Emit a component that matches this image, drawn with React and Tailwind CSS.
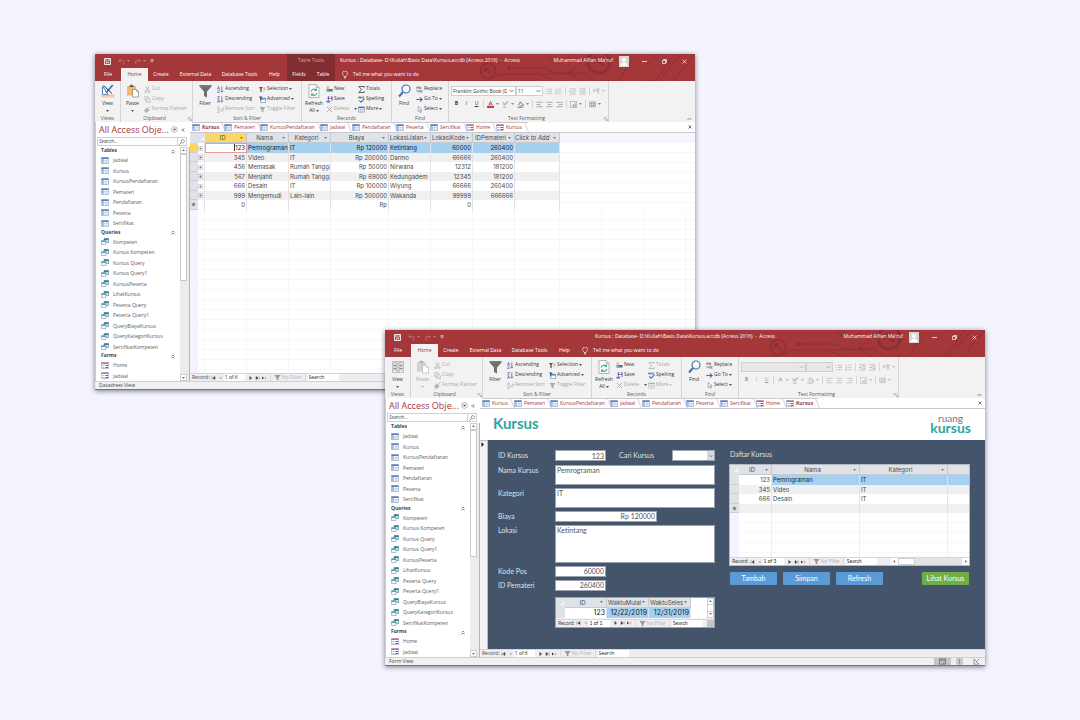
import { useId } from "react";

/* ---------- icons ---------- */

function Svg({ className = "w-[7px] h-[7px]", children, box = "0 0 16 16" }) {
  return (
    <svg viewBox={box} className={`shrink-0 ${className}`} fill="none" aria-hidden="true">
      {children}
    </svg>
  );
}

const tone = (off, color) => (off ? "#b4b4b4" : color);

const DownArrow = ({ className = "w-[3px] h-[2px]", color = "#777" }) => (
  <Svg className={className} box="0 0 6 4">
    <path d="M0 0h6L3 4z" fill={color} />
  </Svg>
);

const ViewDesignIcon = () => (
  <Svg className="w-[14px] h-[14px]" box="0 0 28 28">
    <path d="M3 4v17h11z" fill="#fff" stroke="#4f81bd" strokeWidth="2" />
    <path d="M2 22h24v4H2z" fill="#fbe3d0" stroke="#e8a87c" strokeWidth="1.2" />
    <path d="M25 3 12 18l-3 1 1-4L22 1z" fill="#3a7abf" />
    <path d="M5 3l17 16" stroke="#333" strokeWidth="2" />
    <path d="M6 22v2M10 22v2M14 22v2M18 22v2M22 22v2" stroke="#d28a5a" />
  </Svg>
);
const ViewFormIcon = () => (
  <Svg className="w-[14px] h-[14px]" box="0 0 28 28">
    <path d="M3 3h22v22H3zM3 8h22M3 14h22M3 20h22M12 3v22M16 3v22" stroke="#aaa" strokeWidth="1.4" />
    <path d="M5 10h6v2H5zM17 10h6v2h-6zM5 16h6v2H5zM17 16h6v2h-6zM5 5h6v1H5zM17 5h6v1h-6z" fill="#888" />
  </Svg>
);
const PasteIcon = ({ off }) => (
  <Svg className="w-[14px] h-[14px]" box="0 0 28 28">
    <rect x="2" y="4" width="18" height="19" fill={off ? "#d2d2d2" : "#edbd6b"} />
    <path d="M7 6V3h2a2 2 0 0 1 4 0h2v3z" fill={off ? "#aaa" : "#555"} />
    <path d="M13 11h8l4 4v11H13z" fill="#fff" stroke={off ? "#b0b0b0" : "#777"} strokeWidth="1.3" />
    <path d="M21 11v4h4" stroke={off ? "#b0b0b0" : "#777"} />
  </Svg>
);
const CutIcon = () => (
  <Svg>
    <path d="M4 1l7 10M12 1L5 11" stroke="#aaa" strokeWidth="1.8" />
    <circle cx="4" cy="13" r="2" stroke="#aaa" strokeWidth="1.6" />
    <circle cx="12" cy="13" r="2" stroke="#aaa" strokeWidth="1.6" />
  </Svg>
);
const CopyIcon = () => (
  <Svg>
    <path d="M2 1h6l2 2v8H2z" fill="#eee" stroke="#aaa" strokeWidth="1.3" />
    <path d="M6 5h6l3 3v7H6z" fill="#f5f5f5" stroke="#aaa" strokeWidth="1.3" />
    <path d="M8 9h5M8 12h5" stroke="#aaa" />
  </Svg>
);
const BrushIcon = () => (
  <Svg>
    <path d="M15 1l-5 4M1 9c3 0 4-2 5-5l6 5c-2 3-5 5-8 6z" stroke="#a5a5a5" fill="#bbb" strokeWidth="1.6" />
  </Svg>
);
const FunnelBig = () => (
  <Svg className="w-[13px] h-[14px]" box="0 0 26 28">
    <path d="M1 2h24v3l-9 10v12l-6-3v-9L1 5z" fill="#6f6f6f" />
    <path d="M1 4h24" stroke="#9a9a9a" />
  </Svg>
);
const FunnelIcon = ({ color = "#aaa" }) => (
  <Svg>
    <path d="M1 2h14L10 9v6l-4-2V9z" fill={color} />
  </Svg>
);
const SortIcon = ({ top, bottom }) => (
  <Svg>
    {top === "A" ? (
      <path d="M1 7l2.5-6L6 7M2 5h3M1 9h5l-5 6h5" stroke="#3f6fb5" strokeWidth="1.5" />
    ) : (
      <path d="M1 1h5L1 7h5M1 15l2.5-6L6 15M2 13h3" stroke={bottom ? "#6a55b5" : "#3f6fb5"} strokeWidth="1.5" />
    )}
    <path d="M11 1v13M8 11l3 3 3-3" stroke="#555" strokeWidth="1.6" />
  </Svg>
);
const RemoveSortIcon = () => (
  <Svg>
    <path d="M1 7l2.5-6L6 7M1 9h5l-5 6h5M9 10l5-6 2 3-5 6z" stroke="#aaa" strokeWidth="1.5" />
  </Svg>
);
const SelectionIcon = () => (
  <Svg>
    <path d="M0 2h9L6 7v7l-3-1V7z" fill="#555" />
    <path d="M13 2l-4 6h3l-3 6 6-8h-3l3-4z" fill="#ea9a3e" />
  </Svg>
);
const AdvancedIcon = () => (
  <Svg>
    <path d="M4 5h11v10H4z" fill="#fff" stroke="#4a7fb8" strokeWidth="1.4" />
    <path d="M4 5h11v3H4z" fill="#4a7fb8" />
    <path d="M0 1h8L5 5v5L3 9V5z" fill="#444" />
  </Svg>
);
const RefreshIcon = () => (
  <Svg className="w-[12px] h-[14px]" box="0 0 24 28">
    <path d="M2 1h14l6 6v20H2z" fill="#fff" stroke="#999" strokeWidth="1.4" />
    <path d="M16 1v6h6" stroke="#999" strokeWidth="1.4" />
    <path d="M6.500 15a5.500 5.500 0 0 1 9.500-3M17.500 18a5.500 5.500 0 0 1-9.500 3" stroke="#4aa985" strokeWidth="2.4" />
    <path d="M18 8v6h-6zM6 25v-6h6z" fill="#4aa985" />
  </Svg>
);
const NewIcon = () => (
  <Svg>
    <path d="M1 7h14v6H1z" fill="#5a9bd5" />
    <path d="M7 8h8v2H7z" fill="#444" />
    <path d="M4 0v7M1 2l6 4M7 2L1 6" stroke="#eda24a" strokeWidth="1.6" />
  </Svg>
);
const SaveRecIcon = () => (
  <Svg>
    <path d="M4 1h11v10H4z" fill="#6f4fa5" />
    <path d="M7 1h5v4H7zM6 7h7v4H6z" fill="#fff" />
    <path d="M1 11h8v4H1z" fill="#4a7fc0" />
  </Svg>
);
const DeleteIcon = () => (
  <Svg>
    <path d="M2 2l12 12M14 2L2 14" stroke="#a5a5a5" strokeWidth="2" />
  </Svg>
);
const SigmaIcon = ({ off }) => (
  <Svg>
    <path d="M14 4V1H2l6 7-6 7h12v-3" stroke={tone(off, "#444")} strokeWidth="2" />
  </Svg>
);
const SpellIcon = () => (
  <Svg>
    <path d="M1 5V2h3v3M1 4h3M6 1v4h3V3H6M14 2h-3v3h3" stroke="#555" strokeWidth="1.3" />
    <path d="M3 10l4 4 8-8" stroke="#3a78c3" strokeWidth="2.600" />
  </Svg>
);
const GridIcon = ({ off }) => (
  <Svg>
    <path d="M1 2h14v12H1z" fill="#fff" stroke={tone(off, "#6483b4")} strokeWidth="1.2" />
    <path d="M1 2h14v3H1z" fill={tone(off, "#4672ad")} />
    <path d="M1 8h14M1 11h14M6 5v9M11 5v9" stroke={tone(off, "#8ba4c9")} />
  </Svg>
);
const FindIcon = () => (
  <Svg className="w-[13px] h-[14px]" box="0 0 26 28">
    <circle cx="16" cy="10" r="8" stroke="#3f74ad" strokeWidth="2.400" fill="#f6faff" />
    <path d="M10 16L2 25" stroke="#3f74ad" strokeWidth="4" />
  </Svg>
);
const ReplaceIcon = () => (
  <Svg>
    <path d="M2 6V2h3v4M2 4h3M8 1v5h3V3H8" stroke="#555" strokeWidth="1.3" />
    <path d="M7 15v-5h3v5M15 10h-3v4h3" stroke="#8a4fa5" strokeWidth="1.4" />
    <path d="M2 8v4h3M4 10l2 2-2 2" stroke="#3a78c3" strokeWidth="1.2" />
  </Svg>
);
const GoToIcon = () => (
  <Svg>
    <path d="M1 8h12M9 3l5 5-5 5" stroke="#2f6fb7" strokeWidth="2.400" />
  </Svg>
);
const PointerIcon = () => (
  <Svg>
    <path d="M5 1v12l3-3 2 5 2-1-2-5h4z" stroke="#777" strokeWidth="1.3" fill="#fff" />
  </Svg>
);
const LinesIcon = ({ kind, off }) => {
  const c = off ? "#b8b8b8" : "#8c8c8c";
  return (
    <Svg>
      {kind === "bullets" && <path d="M1 3h2M1 8h2M1 13h2M6 3h10M6 8h10M6 13h10" stroke="#b0b0b0" strokeWidth="1.6" />}
      {kind === "numbers" && <path d="M2 1v4M1 7h2v3H1M1 12h2v3H1M6 3h9M6 8h9M6 13h9" stroke="#b0b0b0" strokeWidth="1.300" />}
      {kind === "outdent" && <path d="M1 2h14M8 6h7M8 10h7M1 14h14M6 8H1M3 6L1 8l2 2" stroke="#a8a8a8" strokeWidth="1.5" />}
      {kind === "indent" && <path d="M1 2h14M8 6h7M8 10h7M1 14h14M1 8h5M4 6l2 2-2 2" stroke="#a8a8a8" strokeWidth="1.5" />}
      {kind === "left" && <path d="M1 3h14M1 8h9M1 13h14" stroke={c} strokeWidth="1.6" />}
      {kind === "center" && <path d="M1 3h14M4 8h8M1 13h14" stroke={c} strokeWidth="1.6" />}
      {kind === "right" && <path d="M1 3h14M6 8h9M1 13h14" stroke={c} strokeWidth="1.6" />}
      {kind === "ltr" && <path d="M1 3l4 3-4 3zM10 2v10M13 2v10M15 2H9a2 2 0 0 0 0 5" stroke="#b0b0b0" strokeWidth="1.4" />}
      {kind === "alt" && <path d="M1 1h14v14H1zM4 12l8-8M8 14V9h3v5M12 14V6" stroke={c} strokeWidth="1.3" />}
      {kind === "grid" && <path d="M1 2h14v11H1zM1 6h14M1 10h14M6 2v11M11 2v11" stroke={c} strokeWidth="1.3" />}
    </Svg>
  );
};
const FontColorIcon = ({ off }) => (
  <Svg>
    <path d="M4 10l4-9 4 9M5.500 7h5" stroke={off ? "#a0a0a0" : "#555"} strokeWidth="1.6" />
    {!off && <path d="M0 11h16v5H0z" fill="#e83030" />}
  </Svg>
);
const HighlightIcon = ({ off }) => (
  <Svg>
    <path d="M14 1l-7 9-3-2zM1 4h4M1 7h3M2 14h8" stroke={off ? "#a0a0a0" : "#999"} strokeWidth="1.6" />
  </Svg>
);
const FillIcon = ({ off }) => (
  <Svg>
    <path d="M3 8l5-5 6 5-5 4zM7 1v5" stroke={off ? "#a0a0a0" : "#555"} strokeWidth="1.4" />
    <path d="M14 8l1 4" stroke={off ? "#a0a0a0" : "#3a78c3"} strokeWidth="2" />
    <path d="M1 13h13v3H1z" fill={off ? "#ccc" : "#999"} />
  </Svg>
);
const LauncherIcon = () => (
  <Svg className="w-[4px] h-[4px]" box="0 0 8 8">
    <path d="M1 6V1h5M3 3l4 4M7 4v3H4" stroke="#888" />
  </Svg>
);
const TableIcon = () => (
  <Svg className="w-[8px] h-[7px]" box="0 0 16 14">
    <path d="M1 1h14v12H1z" fill="#fff" stroke="#8299c4" strokeWidth="1.2" />
    <path d="M1 1h14v3H1z" fill="#5b7fbc" />
    <path d="M1 4h4v9H1z" fill="#a9bfe2" />
    <path d="M1 7h14M1 10h14M5 4v9M10 4v9" stroke="#a3b5d6" />
  </Svg>
);
const QueryIcon = () => (
  <Svg className="w-[8px] h-[7px]" box="0 0 16 14">
    <path d="M6 1h9v8H6z" fill="#cfe4ea" stroke="#4c8799" strokeWidth="1.3" />
    <path d="M6 1h9v3H6z" fill="#3f7f94" />
    <path d="M1 5h9v8H1z" fill="#f2f7fc" stroke="#7da3c4" strokeWidth="1.3" />
    <path d="M1 5h9v3H1z" fill="#58a0b2" />
  </Svg>
);
const FormIcon = () => (
  <Svg className="w-[8px] h-[7px]" box="0 0 16 14">
    <path d="M1 1h14v12H1z" fill="#fff" stroke="#9598c4" strokeWidth="1.2" />
    <path d="M1 1h14v3H1z" fill="#cc6a80" />
    <path d="M3 6h4v2H3zM3 10h4v2H3z" fill="#c9a9bd" />
    <path d="M9 6h5v2H9zM9 10h5v2H9z" fill="#4a66b0" />
  </Svg>
);
const DoubleUp = () => (
  <Svg className="w-[4px] h-[5px]" box="0 0 8 10">
    <path d="M1 5l3-3 3 3M1 9l3-3 3 3" stroke="#555" strokeWidth="1.3" />
  </Svg>
);
const CloseX = ({ color = "#444" }) => (
  <Svg className="w-[4px] h-[4px]" box="0 0 8 8">
    <path d="M1 1l6 6M7 1L1 7" stroke={color} strokeWidth="1.5" />
  </Svg>
);

/* ---------- title bar and ribbon tabs ---------- */

function Circuit() {
  return (
    <svg
      viewBox="0 0 230 27"
      className="pointer-events-none absolute right-0 top-0 h-[27px] w-[230px]"
      fill="none"
      aria-hidden="true"
    >
      <g stroke="#8c3034">
        <circle cx="23" cy="17" r="7.500" strokeWidth="1.600" />
        <path d="M26 20l-6-6M20 18v-4h4" strokeWidth="1.500" />
        <circle cx="134" cy="8" r="11" strokeWidth="3" />
        <path d="M139 12l-9-8M130 10V4h6" strokeWidth="2.500" />
        <path d="M45 14h36l7 5h16M118 6l-8 7-4 6" />
        <path d="M10 27h12l14-7h68M106 20l12 7M74 20l14 7" />
        <path d="M105 19h14l12 8h22l14-20M80 0l8 6h12l8-6" />
        <path d="M178 27h16l22-27M190 27l20-27M208 27l22-27M178 14l14-14" />
      </g>
      <circle cx="44" cy="14" r="2" fill="#8c3034" />
      <circle cx="105" cy="19" r="2" fill="#8c3034" />
    </svg>
  );
}

const RIBBON_TABS = [
  ["File", "w-[26px]"],
  ["Home", "w-[27px]"],
  ["Create", "w-[26px]"],
  ["External Data", "w-[43px]"],
  ["Database Tools", "w-[45px]"],
  ["Help", "w-[25px]"],
];

function TitleBar({ contextual }) {
  return (
    <header className="relative h-[27px] shrink-0 bg-[#a4373a] text-[5px] text-white">
      <Circuit />
      <div className="relative flex h-[14px]">
        <div className="flex w-[192px] items-center pl-[9px] pr-2">
          <button type="button" aria-label="Save">
            <Svg>
              <path d="M1 1h14v14H1z" stroke="#fff" strokeWidth="2" />
              <path d="M4 2h8v5H4zM5 10h6v5H5z" stroke="#fff" strokeWidth="1.5" />
            </Svg>
          </button>
          <button type="button" aria-label="Undo" className="ml-[7px] flex items-center gap-[2px]">
            <Svg>
              <path d="M6 2L2 6l4 4M2 6h8a4 4 0 0 1 0 8" stroke="#c77b7d" strokeWidth="1.8" />
            </Svg>
            <DownArrow color="#c77b7d" />
          </button>
          <button type="button" aria-label="Redo" className="ml-[4px] flex items-center gap-[2px]">
            <Svg>
              <path d="M10 2l4 4-4 4M14 6H7a4 4 0 0 0 0 8" stroke="#c77b7d" strokeWidth="1.8" />
            </Svg>
            <DownArrow color="#c77b7d" />
          </button>
          <button type="button" aria-label="Customize toolbar" className="ml-[4px]">
            <Svg className="h-[4px] w-[4px]" box="0 0 8 8">
              <path d="M1 1h6M1 3.500h6l-3 3z" stroke="#fff" />
            </Svg>
          </button>
        </div>
        {contextual && (
          <div className="flex w-[48px] items-center justify-center bg-[#812c2f] text-[#dcaaab]">Table Tools</div>
        )}
        <h1 className={`flex flex-1 items-center whitespace-pre ${contextual ? "pl-[5px]" : "pl-[18px]"}`}>
          {"Kursus : Database- D:\\Kuliah\\Basis Data\\Kursus.accdb (Access 2016)  -  Access"}
        </h1>
        <div className="flex items-center pr-[8px]">
          <span>Muhammad Alfian Ma'ruf</span>
          <Svg className="ml-[6px] h-[11px] w-[10px]" box="0 0 20 22">
            <path d="M0 0h20v22H0z" fill="#d9d6d6" />
            <circle cx="10" cy="8" r="4" fill="#fff" />
            <path d="M3 20c0-9 14-9 14 0z" fill="#fff" />
          </Svg>
          <button type="button" aria-label="Minimize" className="ml-[13px]">
            <Svg className="h-[5px] w-[5px]" box="0 0 10 10">
              <path d="M0 5h10" stroke="#fff" strokeWidth="1.500" />
            </Svg>
          </button>
          <button type="button" aria-label="Restore" className="ml-[15px]">
            <Svg className="h-[5px] w-[5px]" box="0 0 10 10">
              <path d="M1 3h6v6H1zM3 3V1h6v6H7" stroke="#fff" strokeWidth="1.400" />
            </Svg>
          </button>
          <button type="button" aria-label="Close" className="ml-[15px]">
            <Svg className="h-[5px] w-[5px]" box="0 0 10 10">
              <path d="M1 1l8 8M9 1L1 9" stroke="#fff" strokeWidth="1.400" />
            </Svg>
          </button>
        </div>
      </div>
      <nav className="relative flex h-[13px]">
        {RIBBON_TABS.map(([name, width]) => (
          <button
            key={name}
            type="button"
            className={`${width} whitespace-nowrap ${name === "Home" ? "bg-[#f3f2f2] text-[#a4373a]" : ""}`}
          >
            {name}
          </button>
        ))}
        {contextual && (
          <div className="flex w-[48px] bg-[#812c2f]">
            <button type="button" className="flex-1">Fields</button>
            <button type="button" className="flex-1">Table</button>
          </div>
        )}
        <button type="button" className={`flex items-center gap-[5px] ${contextual ? "pl-[7px]" : "pl-[5px]"}`}>
          <Svg className="h-[8px] w-[6px]" box="0 0 12 16">
            <path d="M4 11c0-2-3-3-3-6a5 5 0 0 1 10 0c0 3-3 4-3 6zM4 13h4M5 15h2" stroke="#fff" strokeWidth="1.200" />
          </Svg>
          Tell me what you want to do
        </button>
      </nav>
    </header>
  );
}

/* ---------- ribbon ---------- */

function Group({ name, width, launcher, children }) {
  return (
    <section className={`${width} flex shrink-0 flex-col border-r border-[#d5d5d5] pt-[3px]`}>
      <div className="flex flex-1">{children}</div>
      <div className="flex h-[7px] items-center text-[#555]">
        <span className="flex-1 whitespace-nowrap text-center">{name}</span>
        {launcher && <LauncherIcon />}
      </div>
    </section>
  );
}

function BigButton({ icon, label, second, arrow, off, width }) {
  return (
    <button
      type="button"
      disabled={off}
      className={`${width} flex shrink-0 flex-col items-center leading-[7px] ${off ? "text-[#a6a6a6]" : ""}`}
    >
      {icon}
      <span className="mt-[2px]">{label}</span>
      <span className="flex h-[7px] items-center gap-px">
        {second}
        {arrow && <DownArrow color={off ? "#bbb" : "#555"} />}
      </span>
    </button>
  );
}

function Stack({ width, items }) {
  return (
    <div className={`${width} flex shrink-0 flex-col`}>
      {items.map(({ label, icon, off, arrow, far }) => (
        <button
          key={label}
          type="button"
          disabled={off}
          className={`flex h-[10px] items-center gap-px whitespace-nowrap ${off ? "text-[#a6a6a6]" : ""}`}
        >
          {icon}
          <span>{label}</span>
          {arrow && (
            <span className={far ? "ml-[4px]" : ""}>
              <DownArrow color={off && !far ? "#bbb" : "#555"} />
            </span>
          )}
        </button>
      ))}
    </div>
  );
}

function Combo({ label, value, width, off }) {
  return (
    <span className={`relative ${width} ${off ? "bg-[#e8e8e8]" : "bg-white"}`}>
      <select
        aria-label={label}
        disabled={off}
        defaultValue={value}
        className="h-[10px] w-full appearance-none border border-[#cfcfcf] bg-transparent pl-px pr-[8px] text-[5px] leading-[8px] text-[#333]"
      >
        <option value={value}>{value}</option>
      </select>
      <Svg className="pointer-events-none absolute right-[2px] top-[3px] h-[4px] w-[5px]" box="0 0 10 8">
        <path d="M1 2l4 4 4-4" stroke={off ? "#aaa" : "#555"} strokeWidth="1.500" />
      </Svg>
    </span>
  );
}

const Rule = () => <span className="h-[8px] w-px bg-[#d5d5d5]" />;

function Tool({ name, off, arrow, children }) {
  return (
    <button type="button" aria-label={name} className="flex items-center gap-[2px]">
      {children}
      {arrow && <DownArrow color={off ? "#bbb" : "#888"} />}
    </button>
  );
}

function Ribbon({ form }) {
  return (
    <div className="flex h-[41px] shrink-0 bg-[#f3f2f2] text-[5px] text-[#333]">
      <Group name="Views" width="w-[26px]">
        <BigButton width="w-full" icon={form ? <ViewFormIcon /> : <ViewDesignIcon />} label="View" arrow />
      </Group>
      <Group name="Clipboard" width="w-[72px]" launcher>
        <BigButton width="w-[23px]" icon={<PasteIcon off={form} />} label="Paste" arrow off={form} />
        <Stack
          width="w-[48px]"
          items={[
            { label: "Cut", icon: <CutIcon />, off: true },
            { label: "Copy", icon: <CopyIcon />, off: true },
            { label: "Format Painter", icon: <BrushIcon />, off: true },
          ]}
        />
      </Group>
      <Group name="Sort & Filter" width="w-[109px]">
        <BigButton width="w-[24px]" icon={<FunnelBig />} label="Filter" />
        <Stack
          width="w-[42px]"
          items={[
            { label: "Ascending", icon: <SortIcon top="A" /> },
            { label: "Descending", icon: <SortIcon bottom="A" /> },
            { label: "Remove Sort", icon: <RemoveSortIcon />, off: true },
          ]}
        />
        <Stack
          width="w-[42px]"
          items={[
            { label: "Selection", icon: <SelectionIcon />, arrow: true },
            { label: "Advanced", icon: <AdvancedIcon />, arrow: true },
            { label: "Toggle Filter", icon: <FunnelIcon />, off: true },
          ]}
        />
      </Group>
      <Group name="Records" width="w-[90px]">
        <BigButton width="w-[24px]" icon={<RefreshIcon />} label="Refresh" second="All" arrow />
        <Stack
          width="w-[32px]"
          items={[
            { label: "New", icon: <NewIcon /> },
            { label: "Save", icon: <SaveRecIcon /> },
            { label: "Delete", icon: <DeleteIcon />, off: true, arrow: true, far: true },
          ]}
        />
        <Stack
          width="w-[33px]"
          items={[
            { label: "Totals", icon: <SigmaIcon off={form} />, off: form },
            { label: "Spelling", icon: <SpellIcon /> },
            { label: "More", icon: <GridIcon off={form} />, off: form, arrow: true },
          ]}
        />
      </Group>
      <Group name="Find" width="w-[57px]">
        <BigButton width="w-[24px]" icon={<FindIcon />} label="Find" />
        <Stack
          width="w-[32px]"
          items={[
            { label: "Replace", icon: <ReplaceIcon /> },
            { label: "Go To", icon: <GoToIcon />, arrow: true },
            { label: "Select", icon: <PointerIcon />, arrow: true },
          ]}
        />
      </Group>
      <Group name="Text Formatting" width="w-[160px]" launcher>
        <div className="flex flex-1 flex-col gap-[4px] pl-[2px] pt-[2px]">
          <div className="flex items-center">
            <Combo label="Font" value={form ? "" : "Franklin Gothic Book (Detail)"} width="w-[65px]" off={form} />
            <Combo label="Font size" value={form ? "" : "11"} width="w-[27px]" off={form} />
            <div className="flex items-center gap-[3px] pl-[2px]">
              <Tool name="Bullets"><LinesIcon kind="bullets" /></Tool>
              <Tool name="Numbering"><LinesIcon kind="numbers" /></Tool>
              <Rule />
              <Tool name="Decrease indent"><LinesIcon kind="outdent" /></Tool>
              <Tool name="Increase indent"><LinesIcon kind="indent" /></Tool>
              <Rule />
              <Tool name="Text direction" arrow off><LinesIcon kind="ltr" /></Tool>
            </div>
          </div>
          <div className={`flex items-center gap-[3px] pl-[2px] ${form ? "text-[#999]" : "text-[#333]"}`}>
            <button type="button" className="w-[7px] font-bold">B</button>
            <button type="button" className="w-[7px] italic">I</button>
            <button type="button" className="w-[7px] underline">U</button>
            <Rule />
            <Tool name="Font color" arrow off={form}><FontColorIcon off={form} /></Tool>
            <Tool name="Highlight" arrow off={form}><HighlightIcon off={form} /></Tool>
            <Tool name="Fill color" arrow off={form}><FillIcon off={form} /></Tool>
            <Rule />
            <Tool name="Align left"><LinesIcon kind="left" off={form} /></Tool>
            <Tool name="Align center"><LinesIcon kind="center" off={form} /></Tool>
            <Tool name="Align right"><LinesIcon kind="right" off={form} /></Tool>
            <Rule />
            <Tool name="Row color" arrow off={form}><LinesIcon kind="alt" off={form} /></Tool>
            <Rule />
            <Tool name="Gridlines" arrow off={form}><LinesIcon kind="grid" off={form} /></Tool>
          </div>
        </div>
      </Group>
      <div className="flex flex-1 items-end justify-end pb-px pr-[3px]">
        <button type="button" aria-label="Collapse ribbon">
          <Svg className="h-[4px] w-[5px]" box="0 0 10 8">
            <path d="M1 6l4-4 4 4" stroke="#666" strokeWidth="1.400" />
          </Svg>
        </button>
      </div>
    </div>
  );
}

/* ---------- navigation pane ---------- */

const NAV = [
  { name: "Tables", Icon: TableIcon, items: ["Jadwal", "Kursus", "KursusPendaftaran", "Pemateri", "Pendaftaran", "Peserta", "Sertifikat"] },
  {
    name: "Queries",
    Icon: QueryIcon,
    items: [
      "Kompeten", "Kursus Kompeten", "Kursus Query", "Kursus Query1", "KursusPeserta", "LihatKursus",
      "Peserta Query", "Peserta Query1", "QueryBiayaKursus", "QueryKategoriKursus", "SertifikatKompeten",
    ],
  },
  { name: "Forms", Icon: FormIcon, items: ["Home", "Jadwal"] },
];

function ScrollButton({ up, label }) {
  return (
    <button
      type="button"
      aria-label={label}
      className={`flex h-[7px] w-full shrink-0 items-center justify-center border border-[#cfcfcf] bg-white ${up ? "rotate-180" : ""}`}
    >
      <DownArrow />
    </button>
  );
}

function NavPane() {
  return (
    <aside className="flex w-[95px] shrink-0 flex-col border-l border-[#ccc] bg-white text-[5px] text-[#5c5c5c]">
      <div className="flex h-[15px] shrink-0 items-center pl-[3px]">
        <h2 className="flex-1 whitespace-nowrap text-[9px] leading-[15px] text-[#a4373a]">All Access Obje...</h2>
        <button type="button" aria-label="Choose category">
          <Svg>
            <circle cx="8" cy="8" r="6.500" stroke="#777" strokeWidth="1.200" />
            <path d="M4 6h8l-4 5z" fill="#555" />
          </Svg>
        </button>
        <button type="button" aria-label="Collapse pane" className="pl-[3px] pr-[5px]">
          <Svg className="h-[4px] w-[4px]" box="0 0 8 8">
            <path d="M4 1L1 4l3 3M7 1L4 4l3 3" stroke="#555" strokeWidth="1.200" />
          </Svg>
        </button>
      </div>
      <div className="mb-px ml-px mr-[3px] flex h-[9px] shrink-0 items-center border border-[#d0d0d0]">
        <input aria-label="Search objects" placeholder="Search..." className="h-[7px] min-w-0 flex-1 px-px italic placeholder:text-[#444]" />
        <span className="flex h-[7px] w-[9px] items-center justify-center border-l border-[#d0d0d0]">
          <Svg className="h-[6px] w-[6px]">
            <circle cx="10" cy="6" r="4.500" stroke="#4a7ab8" strokeWidth="1.800" />
            <path d="M7 9l-6 6" stroke="#4a7ab8" strokeWidth="2.400" />
          </Svg>
        </span>
      </div>
      <div className="flex min-h-0 flex-1">
        <div className="flex min-w-0 flex-1 flex-col">
          {NAV.map(({ name, Icon, items }) => (
            <div key={name} className="contents">
              <h3 className="flex h-[8px] items-center justify-between pl-[5px] pr-[5px] font-bold text-[#444]">
                {name}
                <DoubleUp />
              </h3>
              {items.map((item) => (
                <a key={item} href={`#${item}`} className="flex min-h-0 flex-1 items-center gap-[4px] whitespace-nowrap pl-[5px] leading-[8px]">
                  <Icon />
                  {item}
                </a>
              ))}
            </div>
          ))}
        </div>
        <div className="flex w-[7px] flex-col bg-[#ececec]">
          <ScrollButton up label="Scroll up" />
          <div className="h-[127px] border border-[#c8c8c8] bg-white" />
          <div className="flex-1" />
          <ScrollButton label="Scroll down" />
        </div>
        <div className="w-[3px] border-r border-[#b5b5b8] bg-[#ececf0]" />
      </div>
    </aside>
  );
}

/* ---------- document tabs ---------- */

const DOCS = [
  ["Kursus", "w-[32px]", TableIcon],
  ["Pemateri", "w-[36px]", TableIcon],
  ["KursusPendaftaran", "w-[60px]", TableIcon],
  ["Jadwal", "w-[32px]", TableIcon],
  ["Pendaftaran", "w-[44px]", TableIcon],
  ["Peserta", "w-[34px]", TableIcon],
  ["Sertifikat", "w-[36px]", TableIcon],
  ["Home", "w-[30px]", FormIcon],
  ["Kursus", "w-[32px]", FormIcon],
];

function DocTabs({ active }) {
  return (
    <div className="flex h-[11px] shrink-0 items-center border-b border-[#c9c9cf] bg-white pl-[2px] text-[5px] text-[#a4373a]">
      {DOCS.map(([name, width, Icon], i) => (
        <button
          key={i}
          type="button"
          className={`${width} flex h-full items-center gap-[2px] whitespace-nowrap border-t border-[#c9c9cf] ${i === active ? "font-bold" : ""}`}
        >
          <Icon />
          <span className="flex-1 text-left">{name}</span>
          <Svg className="h-full w-[5px]" box="0 0 10 20">
            <path d="M0 0c3 1 3 4 4 7l3 8c1 3 2 4 3 5" stroke="#999" />
          </Svg>
        </button>
      ))}
      <span className="flex-1" />
      <button type="button" aria-label="Close document" className="pr-[3px]">
        <CloseX />
      </button>
    </div>
  );
}

/* ---------- shared record bar / grid pieces ---------- */

function NavGlyph({ kind }) {
  return (
    <Svg className="h-[4px] w-[5px]" box="0 0 10 8">
      {kind === "first" && <path d="M2 1v6M8 1L4 4l4 3z" stroke="#444" fill="#444" />}
      {kind === "prev" && <path d="M7 1L3 4l4 3z" fill="#aaa" />}
      {kind === "next" && <path d="M3 0l5 4-5 4z" fill="#444" />}
      {kind === "last" && <path d="M8 1v6M2 1l4 3-4 3z" stroke="#444" fill="#444" />}
      {kind === "new" && (
        <>
          <path d="M0 1l4 3-4 3z" fill="#333" />
          <path d="M7 1v6M5 2l4 4M9 2L5 6" stroke="#e8a33c" />
        </>
      )}
    </Svg>
  );
}

function RecordBar({ position, tail }) {
  return (
    <div className="flex h-[8px] shrink-0 items-center overflow-hidden border-t border-[#d5d5da] bg-[#eeeef2] text-[5px] leading-[7px] text-[#444]">
      <span className="pl-[2px]">Record:</span>
      <button type="button" aria-label="First record" className="ml-px"><NavGlyph kind="first" /></button>
      <button type="button" aria-label="Previous record" className="ml-[2px]"><NavGlyph kind="prev" /></button>
      <input
        aria-label="Current record"
        defaultValue={position}
        className="ml-px h-[7px] w-[21px] bg-white px-px text-[#222]"
      />
      <button type="button" aria-label="Next record" className="ml-[3px]"><NavGlyph kind="next" /></button>
      <button type="button" aria-label="Last record" className="ml-[2px]"><NavGlyph kind="last" /></button>
      <button type="button" aria-label="New record" className="ml-[2px]"><NavGlyph kind="new" /></button>
      <button type="button" disabled className="ml-[3px] flex items-center gap-px whitespace-nowrap border-x border-[#dcdce0] px-[3px] text-[#b5b5b5]">
        <FunnelIcon color="#999" />
        No Filter
      </button>
      <input aria-label="Search records" defaultValue="Search" className="ml-[2px] h-[7px] w-[31px] bg-white px-px text-[#222]" />
      <span className="flex-1" />
      {tail}
    </div>
  );
}

function Th({ children, className = "", italic }) {
  return (
    <th scope="col" className={`overflow-hidden border-b border-r border-[#c5c9d0] p-0 font-normal ${className}`}>
      <div className="flex items-center pr-[3px] leading-[9px]">
        <span className={`min-w-0 flex-1 whitespace-nowrap ${italic ? "text-left italic" : "text-center"}`}>{children}</span>
        <DownArrow />
      </div>
    </th>
  );
}

const cell = "overflow-hidden whitespace-nowrap border-r border-[#e3e3e6] px-px py-0";

const NewRowMark = () => (
  <Svg className="mx-auto h-[5px] w-[5px]" box="0 0 10 10">
    <path d="M5 1v8M1 5h8M2 2l6 6M8 2L2 8" stroke="#666" strokeWidth="1.200" />
  </Svg>
);

const Corner = () => (
  <Svg className="ml-auto h-[6px] w-[6px]" box="0 0 12 12">
    <path d="M11 1v10H1z" fill="#f2f4f6" />
  </Svg>
);

const EMPTY_LINES =
  "bg-[repeating-linear-gradient(to_bottom,transparent_0px,transparent_9px,#f7f7fa_9px,#f7f7fa_10px)]";

/* ---------- datasheet window ---------- */

const COLS = [
  ["ID", "w-[42px]", "right"],
  ["Nama", "w-[42px]", "left"],
  ["Kategori", "w-[42px]", "left"],
  ["Biaya", "w-[58px]", "right"],
  ["LokasiJalan", "w-[42px]", "left"],
  ["LokasiKode", "w-[42px]", "right"],
  ["IDPemateri", "w-[42px]", "right"],
  ["Click to Add", "w-[45px]", "left"],
];

const RECORDS = [
  ["123", "Pemrograman", "IT", "Rp 120000", "Ketintang", "60000", "260400", ""],
  ["345", "Video", "IT", "Rp 200000", "Darmo", "66666", "260400", ""],
  ["456", "Memasak", "Rumah Tangga", "Rp 50000", "Nirwana", "12312", "181200", ""],
  ["567", "Menjahit", "Rumah Tangga", "Rp 69000", "Kedungadem", "12345", "181200", ""],
  ["666", "Desain", "IT", "Rp 100000", "Wiyung", "66666", "260400", ""],
  ["999", "Mengemudi", "Lain-lain", "Rp 500000", "Wakanda", "99999", "666666", ""],
  ["0", "", "", "Rp", "", "0", "", ""],
];

const FILLERS = ["w-[7px]", ...COLS.map((c) => c[1]), "w-[42px]", "w-[42px]", "w-[42px]"];

function Datasheet() {
  return (
    <div className="flex min-h-0 flex-1 flex-col bg-white">
      <div className="flex shrink-0">
        <table className="w-[370px] shrink-0 table-fixed border-separate border-spacing-0 font-['Inter',sans-serif] text-[6px] leading-[8px] text-[#4a4a4a]">
          <thead>
            <tr className="bg-[#dfe3e8]">
              <th colSpan={2} aria-label="Select all" className="w-[15px] p-0"><Corner /></th>
              {COLS.map(([name, width], i) => (
                <Th key={name} italic={i === 7} className={`${width} ${i === 0 ? "bg-[#fdd663]" : ""}`}>{name}</Th>
              ))}
            </tr>
          </thead>
          <tbody>
            {RECORDS.map((row, r) => {
              const last = r === RECORDS.length - 1;
              const bg = r === 0 ? "bg-[#a6d0f0] text-[#222]" : r % 2 && !last ? "bg-[#f0f0f0]" : "bg-white";
              return (
                <tr key={r} className={`h-[10px] even:h-[9px] ${bg}`}>
                  <td className={`w-[8px] border-b border-[#c9cdd4] p-0 ${r === 0 ? "bg-[#fdd65f]" : "bg-[#dfe3e8]"}`}>
                    {last && <NewRowMark />}
                  </td>
                  <td className={`w-[7px] border-r border-[#e3e3e6] p-0 ${r % 2 && !last ? "bg-[#f0f0f0]" : "bg-white"}`}>
                    {!last && (
                      <button type="button" aria-label="Expand row" className="mx-auto block">
                        <Svg className="h-[5px] w-[5px]" box="0 0 10 10">
                          <path d="M1 1h8v8H1z" stroke="#aaa" />
                          <path d="M3 5h4M5 3v4" stroke="#333" />
                        </Svg>
                      </button>
                    )}
                  </td>
                  {row.map((value, c) => (
                    <td
                      key={c}
                      className={`${cell} ${COLS[c][2] === "right" ? "text-right" : ""} ${
                        r === 0 && c === 0 ? "bg-white outline outline-[#ef9a9a] -outline-offset-1" : ""
                      }`}
                    >
                      {r === 0 && c === 0 ? <span className="border-l border-[#333]">{value}</span> : value}
                    </td>
                  ))}
                </tr>
              );
            })}
          </tbody>
        </table>
        <div className={`flex-1 ${EMPTY_LINES}`}>
          <div className="h-[10px] bg-[#f6f7fe]" />
        </div>
      </div>
      <div className={`flex min-h-0 flex-1 overflow-hidden ${EMPTY_LINES}`}>
        <div className="w-[8px] shrink-0 bg-[#f3f4fd]" />
        {FILLERS.map((w, i) => (
          <div key={i} className={`${w} shrink-0 border-r border-[#f7f7fa]`} />
        ))}
      </div>
      <RecordBar position="1 of 6" />
    </div>
  );
}

/* ---------- form window ---------- */

const fieldBox = "border border-[#9aa3af] bg-white px-px text-[#555]";

function Field({ label, value, area, width = "w-full", height = "h-[11px]", extra }) {
  const id = useId();
  return (
    <div className="flex">
      <label htmlFor={id} className="w-[57px] shrink-0 leading-[11px]">{label}</label>
      {area ? (
        <textarea id={id} defaultValue={value} className={`${fieldBox} ${height} min-w-0 flex-1 resize-none overflow-hidden leading-[9px]`} />
      ) : (
        <input id={id} defaultValue={value} className={`${fieldBox} h-[11px] ${width} text-right leading-[9px]`} />
      )}
      {extra}
    </div>
  );
}

function CourseSearch() {
  const id = useId();
  return (
    <>
      <label htmlFor={id} className="flex-1 pl-[13px] leading-[11px]">Cari Kursus</label>
      <span className="relative">
        <select id={id} className="h-[11px] w-[43px] appearance-none border border-[#9aa3af] bg-white">
          <option value="" />
        </select>
        <span className="pointer-events-none absolute right-px top-px flex h-[9px] w-[7px] items-center justify-center bg-[#d8dade]">
          <Svg className="h-[4px] w-[4px]" box="0 0 8 8">
            <path d="M1 2l3 4 3-4" stroke="#777" strokeWidth="1.300" />
          </Svg>
        </span>
      </span>
    </>
  );
}

function ScheduleSheet() {
  return (
    <div className="ml-[57px] mt-[3px] flex flex-col border border-[#9aa3af] bg-white">
      <div className="flex">
        <div className="flex-1">
          <table className="h-[20px] w-[135px] table-fixed border-separate border-spacing-0 font-['Inter',sans-serif] text-[6px] leading-[8px] text-[#4a4a4a]">
            <thead>
              <tr className="bg-[#dfe3e8]">
                <th aria-label="Select all" className="w-[9px] p-0"><Corner /></th>
                <Th className="w-[42px]">ID</Th>
                <Th className="w-[42px]">WaktuMulai</Th>
                <Th className="w-[42px]">WaktuSeles</Th>
              </tr>
            </thead>
            <tbody>
              <tr className="text-[7px] text-[#222]">
                <td className="bg-[#dfe3e8] p-0" />
                <td className={`${cell} text-right`}>123</td>
                <td className={`${cell} bg-[#a6d0f0] text-right`}>12/22/2019</td>
                <td className={`${cell} bg-[#a6d0f0] text-right`}>12/31/2019</td>
              </tr>
            </tbody>
          </table>
        </div>
        <div className="flex w-[7px] flex-col bg-[#ececec]">
          <ScrollButton up label="Scroll up" />
          <div className="flex-1 border-x border-[#cfcfcf] bg-white" />
          <ScrollButton label="Scroll down" />
        </div>
      </div>
      <div className="h-px bg-[#f3f4fd]" />
      <RecordBar position="1 of 1" tail={<span className="h-full w-[7px] bg-[#c4c6ca]" />} />
    </div>
  );
}

const LIST = [
  ["123", "Pemrograman", "IT"],
  ["345", "Video", "IT"],
  ["666", "Desain", "IT"],
  ["", "", ""],
];

function CourseList() {
  return (
    <div className="flex h-[100px] flex-col bg-white outline outline-[#b5bac2]">
      <table className="w-full shrink-0 table-fixed border-separate border-spacing-0 font-['Inter',sans-serif] text-[6px] leading-[8px] text-[#4a4a4a]">
        <thead>
          <tr className="bg-[#dfe3e8]">
            <th aria-label="Select all" className="w-[9px] p-0"><Corner /></th>
            <Th className="w-[33px]">ID</Th>
            <Th className="w-[88px]">Nama</Th>
            <Th className="w-[88px]">Kategori</Th>
            <td className="border-b border-[#c5c9d0]" />
          </tr>
        </thead>
        <tbody>
          {LIST.map((row, r) => (
            <tr key={r} className={`h-[10px] even:h-[9px] ${r % 2 ? "bg-[#f0f0f0]" : "bg-white"}`}>
              <td className="border-b border-[#c9cdd4] bg-[#dfe3e8] p-0">{r === 3 && <NewRowMark />}</td>
              {row.map((value, c) => (
                <td
                  key={c}
                  className={`${cell} ${c === 0 ? "text-right" : r === 0 ? "bg-[#a6d0f0] text-[#222]" : ""}`}
                >
                  {value}
                </td>
              ))}
              <td className={r === 0 ? "bg-[#a6d0f0] p-0" : "p-0"} />
            </tr>
          ))}
        </tbody>
      </table>
      <div className={`flex flex-1 ${EMPTY_LINES}`}>
        <div className="w-[9px] bg-[#f3f4fd]" />
        <div className="w-[33px] border-r border-[#efeff3]" />
        <div className="w-[88px] border-r border-[#efeff3]" />
        <div className="w-[88px] border-r border-[#efeff3]" />
      </div>
      <RecordBar
        position="1 of 3"
        tail={
          <span className="flex h-full w-[78px] justify-between bg-[#e4e4e8]">
            <span className="flex">
              <span className="flex h-full w-[7px] rotate-90 items-center justify-center bg-white"><DownArrow /></span>
              <span className="h-full w-[17px] border border-[#cfcfcf] bg-white" />
            </span>
            <span className="flex h-full w-[7px] -rotate-90 items-center justify-center bg-white"><DownArrow /></span>
          </span>
        }
      />
    </div>
  );
}

function CourseForm() {
  return (
    <div className="flex min-h-0 flex-1 flex-col bg-white">
      <div className="flex h-[31px] shrink-0 items-center justify-between pl-[13px] pr-[14px] font-['Lato',sans-serif]">
        <h2 className="pb-[4px] text-[15px] font-bold leading-[18px] text-[#2ea69b]">Kursus</h2>
        <div className="pb-[3px] text-right">
          <div className="pr-[8px] text-[10px] leading-[9px] text-[#6f7780]">ruang</div>
          <div className="text-[14px] font-bold leading-[9px] text-[#2ea69b]">kursus</div>
        </div>
      </div>
      <div className="flex min-h-0 flex-1">
        <div className="w-[8px] shrink-0 border-r border-t border-[#b8bcc4] bg-[#f3f3f6] pt-px">
          <Svg className="h-[5px] w-[5px]" box="0 0 10 10">
            <path d="M3 0l5 5-5 5z" fill="#222" />
          </Svg>
        </div>
        <div className="flex flex-1 items-start bg-[#44546a] pl-[10px] pr-[16px] pt-[10px] font-['Lato',sans-serif] text-[7px] text-[#dfe3e9]">
          <div className="flex w-[217px] shrink-0 flex-col gap-[3px]">
            <Field label="ID Kursus" value="123" width="w-[51px]" extra={<CourseSearch />} />
            <Field label="Nama Kursus" value="Pemrograman" area height="h-[20px]" />
            <Field label="Kategori" value="IT" area height="h-[20px]" />
            <Field label="Biaya" value="Rp 120000" width="w-[102px]" />
            <Field label="Lokasi" value="Ketintang" area height="h-[38px]" />
            <Field label="Kode Pos" value="60000" width="w-[51px]" />
            <Field label="ID Pemateri" value="260400" width="w-[51px]" />
            <ScheduleSheet />
          </div>
          <div className="ml-[15px] min-w-0 flex-1">
            <h3 className="pb-[6px] leading-[9px]">Daftar Kursus</h3>
            <CourseList />
            <div className="mt-[7px] flex gap-[6px] text-white">
              <button type="button" className="h-[13px] w-[47px] rounded-[1px] bg-[#5b9bd5]">Tambah</button>
              <button type="button" className="h-[13px] w-[47px] rounded-[1px] bg-[#5b9bd5]">Simpan</button>
              <button type="button" className="h-[13px] w-[47px] rounded-[1px] bg-[#5b9bd5]">Refresh</button>
              <button type="button" className="ml-auto h-[13px] w-[47px] rounded-[1px] bg-[#70ad47]">Lihat Kursus</button>
            </div>
          </div>
        </div>
      </div>
      <RecordBar position="1 of 6" />
    </div>
  );
}

/* ---------- window frame ---------- */

function StatusBar({ text, views }) {
  return (
    <footer className="flex h-[9px] shrink-0 items-center border-b border-t border-[#d0d0d0] border-b-[#777] bg-[#f1f1f1] pl-[4px] text-[5px] text-[#444]">
      <span className="flex-1">{text}</span>
      {views && (
        <div className="flex h-full pr-px">
          <button type="button" aria-label="Form view" className="flex w-[17px] items-center justify-center bg-[#c6c6c6]">
            <Svg>
              <path d="M1 2h14v12H1zM1 5h14M9 11h4" stroke="#555" strokeWidth="1.500" />
            </Svg>
          </button>
          <button type="button" aria-label="Layout view" className="flex w-[17px] items-center justify-center">
            <Svg>
              <path d="M2 2h12v12H2zM5 5h6M5 8h6M5 11h6M8 2v12" stroke="#777" strokeWidth="1.300" />
            </Svg>
          </button>
          <button type="button" aria-label="Design view" className="flex w-[16px] items-center justify-center">
            <Svg>
              <path d="M2 2v12h12zM14 2L7 9" stroke="#777" strokeWidth="1.600" />
            </Svg>
          </button>
        </div>
      )}
    </footer>
  );
}

function AccessWindow({ place, form, children }) {
  return (
    <article
      className={`absolute ${place} flex h-[336px] w-5/9 min-w-[600px] flex-col bg-white shadow-[0_1px_5px_rgba(40,40,60,0.6)]`}
    >
      <TitleBar contextual={!form} />
      <Ribbon form={form} />
      <div className="flex min-h-0 flex-1">
        <NavPane />
        <div className="flex min-w-0 flex-1 flex-col">
          <DocTabs active={form ? 8 : 0} />
          {children}
        </div>
      </div>
      <StatusBar text={form ? "Form View" : "Datasheet View"} views={form} />
    </article>
  );
}

export default function App() {
  return (
    <main className="relative min-h-screen overflow-hidden bg-[#f3f4fd] font-['Open_Sans','Noto_Sans',sans-serif]">
      <AccessWindow place="left-[95px] top-[54px]">
        <Datasheet />
      </AccessWindow>
      <AccessWindow place="left-[385px] top-[330px]" form>
        <CourseForm />
      </AccessWindow>
    </main>
  );
}
